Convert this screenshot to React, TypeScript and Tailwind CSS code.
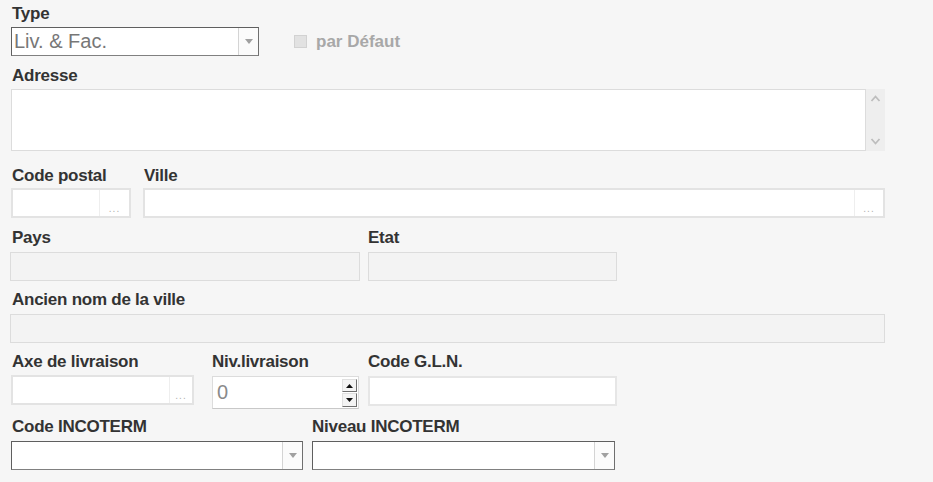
import React from 'react';

const Label: React.FC<{ text: string; className?: string }> = ({ text, className = '' }) => (
    <div className={`h-[22px] leading-[23px] text-[17px] tracking-[-0.25px] font-bold text-[#333] whitespace-nowrap font-['Liberation_Sans',Arial,sans-serif] ${className}`}>
        {text}
    </div>
);

const ComboBox: React.FC<{ width: string; value?: string }> = ({ width, value }) => (
    <div className={`${width} h-[29px] flex bg-white border border-[#5f5f5f] border-b-[#808080] border-r-[#6f6f6f]`}>
        <div className="flex-1 pl-[2px] text-[20px] leading-[27px] text-[#777] font-['Liberation_Sans',Arial,sans-serif] overflow-hidden whitespace-nowrap">
            {value}
        </div>
        <div className="w-[20px] border-l border-[#d4d4d4] bg-[#fbfbfb] flex items-center justify-center">
            <svg width="8" height="5" viewBox="0 0 8 5"><path d="M0 0h8L4 5z" fill="#a0a0a0" /></svg>
        </div>
    </div>
);

const LookupInput: React.FC<{ width: string; sep: string }> = ({ width, sep }) => (
    <div className={`${width} h-[30px] flex bg-white border-2 border-[#e3e3e3]`}>
        <div className="flex-1" />
        <div className={`${sep} border-l border-[#eeeeee] flex items-end justify-center pb-[2px]`}>
            <span className="text-[10px] leading-[10px] text-[#b0b0b0] tracking-[1px] font-['Liberation_Sans',Arial,sans-serif]">...</span>
        </div>
    </div>
);

const GrayInput: React.FC<{ width: string }> = ({ width }) => (
    <div className={`${width} h-[29px] bg-[#f3f3f3] border border-[#dcdcdc]`} />
);

const WhiteInput: React.FC<{ width: string }> = ({ width }) => (
    <div className={`${width} h-[30px] bg-white border-2 border-[#e6e6e6]`} />
);

const Spinner: React.FC = () => (
    <div className="w-[147px] h-[33px] flex bg-white border border-[#dcdcdc] border-b-[#c8c8c8]">
        <div className="flex-1 pl-[4px] text-[20px] leading-[30px] text-[#8a8a8a] font-['Liberation_Sans',Arial,sans-serif]">0</div>
        <div className="w-[15px] mr-[1px] mt-[2px] flex flex-col gap-[1px]">
            <div className="h-[13px] bg-[#f4f4f4] border border-[#e0e0e0] border-r-[#707070] border-b-[#707070] flex items-center justify-center">
                <svg width="7" height="4" viewBox="0 0 7 4"><path d="M0 4h7L3.5 0z" fill="#111" /></svg>
            </div>
            <div className="h-[14px] bg-[#f4f4f4] border border-[#e0e0e0] border-r-[#707070] border-b-[#707070] flex items-center justify-center">
                <svg width="7" height="4" viewBox="0 0 7 4"><path d="M0 0h7L3.5 4z" fill="#111" /></svg>
            </div>
        </div>
    </div>
);

const App: React.FC = () => {
    return (
        <div className="w-[933px] h-[482px] bg-[#f6f6f6] pl-[11px] pt-[2px] overflow-hidden">
            <Label text="Type" className="pl-[1px]" />
            <div className="flex items-center mt-[3px]">
                <ComboBox width="w-[248px]" value="Liv. & Fac." />
                <div className="ml-[35px] flex items-center">
                    <div className="w-[13px] h-[13px] bg-[#e2e2e2] border border-[#d2d2d2]" />
                    <span className="ml-[9px] text-[17px] font-bold text-[#a8a8a8] font-['Liberation_Sans',Arial,sans-serif]">par Défaut</span>
                </div>
            </div>

            <Label text="Adresse" className="pl-[1px] mt-[8px]" />
            <div className="flex mt-[3px]">
                <div className="w-[855px] h-[62px] bg-white border border-[#dcdcdc]" />
                <div className="w-[19px] h-[62px] bg-[#eeeeee] flex flex-col items-center justify-between py-[6px]">
                    <svg width="11" height="7" viewBox="0 0 11 7"><path d="M1.5 6l4-4.5 4 4.5" stroke="#bdbdbd" strokeWidth="1.8" fill="none" /></svg>
                    <svg width="11" height="7" viewBox="0 0 11 7"><path d="M1.5 1l4 4.5 4-4.5" stroke="#bdbdbd" strokeWidth="1.8" fill="none" /></svg>
                </div>
            </div>

            <div className="flex mt-[13px]">
                <Label text="Code postal" className="w-[132px] pl-[1px]" />
                <Label text="Ville" className="pl-[1px]" />
            </div>
            <div className="flex gap-[12px] mt-[2px]">
                <LookupInput width="w-[120px]" sep="w-[30px]" />
                <LookupInput width="w-[742px]" sep="w-[29px]" />
            </div>

            <div className="flex mt-[8px]">
                <Label text="Pays" className="w-[357px] pl-[1px]" />
                <Label text="Etat" />
            </div>
            <div className="flex gap-[8px] mt-[4px] -ml-[1px]">
                <GrayInput width="w-[350px]" />
                <GrayInput width="w-[249px]" />
            </div>

            <Label text="Ancien nom de la ville" className="pl-[1px] mt-[7px]" />
            <div className="flex mt-[4px] -ml-[1px]">
                <GrayInput width="w-[875px]" />
            </div>

            <div className="flex mt-[7px]">
                <Label text="Axe de livraison" className="w-[201px] pl-[1px]" />
                <Label text="Niv.livraison" className="w-[156px]" />
                <Label text="Code G.L.N." />
            </div>
            <div className="flex items-start mt-[3px]">
                <LookupInput width="w-[183px]" sep="w-[23px]" />
                <div className="ml-[18px] mt-[1px]">
                    <Spinner />
                </div>
                <div className="ml-[9px] mt-[1px]">
                    <WhiteInput width="w-[249px]" />
                </div>
            </div>

            <div className="flex mt-[6px]">
                <Label text="Code INCOTERM" className="w-[301px] pl-[1px]" />
                <Label text="Niveau INCOTERM" />
            </div>
            <div className="flex gap-[9px] mt-[4px]">
                <ComboBox width="w-[292px]" />
                <ComboBox width="w-[303px]" />
            </div>
        </div>
    );
};

export default App;
